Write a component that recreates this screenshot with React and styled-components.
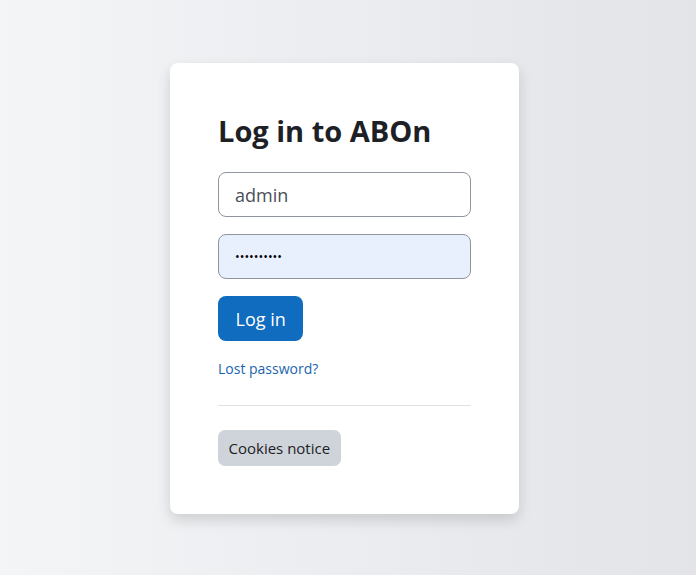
import styled, { createGlobalStyle } from 'styled-components'

const GlobalStyle = createGlobalStyle`
   html, body {
      margin: 0;
      padding: 0;
      height: 100%;
   }
   body {
      font-family: 'Open Sans', 'Noto Sans', sans-serif;
      color: #1d2125;
      background: linear-gradient(to right, #f4f5f7 0%, #e2e4e8 100%);
   }
`

const Page = styled.div`
   min-height: 575px;
   display: flex;
   justify-content: center;
   align-items: flex-start;
   padding: 63px 7px 0 0;
   box-sizing: border-box;
`

const Card = styled.div`
   width: 349px;
   box-sizing: border-box;
   padding: 48px 48px 48px;
   background: #fff;
   border-radius: 8px;
   box-shadow: 0 6px 14px rgba(0, 0, 0, 0.14);
   display: flex;
   flex-direction: column;
`

const Heading = styled.h1`
   margin: 2px 0 23px;
   font-size: 29px;
   line-height: 36px;
   font-weight: 700;
   color: #1d2125;
`

const Field = styled.input`
   box-sizing: border-box;
   width: 100%;
   height: 45px;
   margin: 0 0 17px;
   padding: 0 16px;
   font-family: inherit;
   font-size: 18px;
   color: #495057;
   background: ${props => (props.$filled ? '#e8f0fe' : '#fff')};
   border: 1px solid #8f959e;
   border-radius: 8px;
   outline: none;
   &[type='password'] {
      color: #000;
      font-size: 12.5px;
   }
`

const PrimaryButton = styled.button`
   align-self: flex-start;
   height: 45px;
   padding: 0 17.5px;
   font-family: inherit;
   font-size: 18px;
   color: #fff;
   background: #0f6cbf;
   border: none;
   border-radius: 8px;
   cursor: pointer;
`

const LostLink = styled.a`
   margin-top: 17px;
   align-self: flex-start;
   font-size: 14px;
   line-height: 21px;
   color: #1a64ad;
   text-decoration: none;
`

const Divider = styled.hr`
   width: 100%;
   margin: 26px 0 24px;
   border: none;
   border-top: 1px solid #dee2e6;
`

const SecondaryButton = styled.button`
   align-self: flex-start;
   height: 36px;
   padding: 0 10.5px;
   font-family: inherit;
   font-size: 15px;
   color: #1d2125;
   background: #ced4da;
   border: none;
   border-radius: 7px;
   cursor: pointer;
`

export default function App() {
   return (
      <>
         <GlobalStyle />
         <Page>
            <Card>
               <Heading>Log in to ABOn</Heading>
               <Field type="text" defaultValue="admin" />
               <Field type="password" defaultValue="••••••••••" $filled />
               <PrimaryButton>Log in</PrimaryButton>
               <LostLink href="#">Lost password?</LostLink>
               <Divider />
               <SecondaryButton>Cookies notice</SecondaryButton>
            </Card>
         </Page>
      </>
   )
}
